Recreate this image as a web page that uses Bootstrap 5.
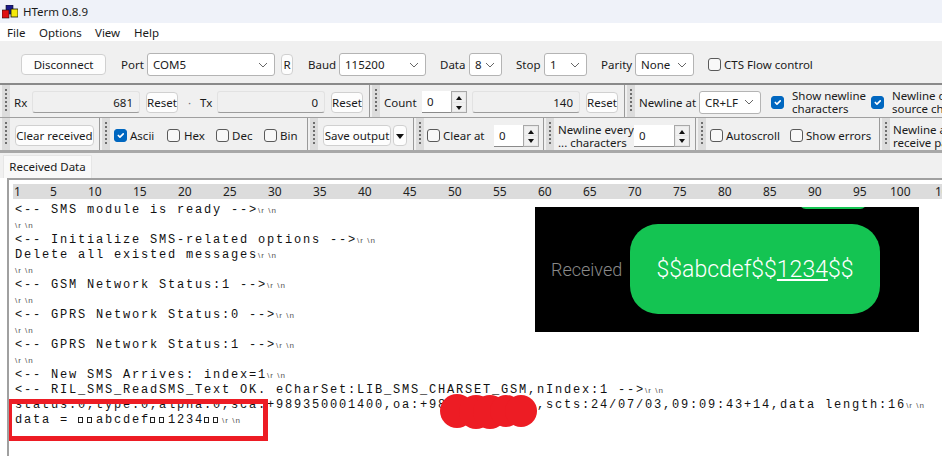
<!DOCTYPE html>
<html lang="en">
<head>
<meta charset="utf-8">
<title>HTerm 0.8.9</title>
<link href="https://cdn.jsdelivr.net/npm/bootstrap@5.3.0/dist/css/bootstrap.min.css" rel="stylesheet">
<style>
html,body{height:456px;overflow:hidden}
body{font-family:"Noto Sans","Open Sans",sans-serif;font-size:11.5px;line-height:15px;color:#1a1a1a;background:#fff;width:942px}
.titlebar{height:23px;background:#eff2f9;padding-left:2px}
.titlebar svg{margin-right:5px}
.menubar{height:18px;background:#fff;padding-left:7px}
.tool{background:#f0f0f0;white-space:nowrap;overflow:hidden;width:942px}
.tool span{flex:none}
.row1{height:44px;padding-top:5px;padding-left:21px;border-bottom:2px solid #8a8a8a}
.row2{height:33px;padding-top:2px;border-bottom:1px solid #a0a0a0}
.row3{height:35px;padding-top:3px;border-bottom:3px solid #a8a8a8}
.row2 .grip,.row2 .vsep{margin-top:-2px}
.row3 .grip,.row3 .vsep{margin-top:-3px}
.grip{width:8px;align-self:stretch;margin-left:2px;background-color:#dcdcdc;background-image:repeating-linear-gradient(#6e6e6e 0 2px,transparent 2px 4px);background-size:2px 24px;background-repeat:no-repeat;background-position:3px 4px;flex:none}
.vsep{width:1px;align-self:stretch;background:#9a9a9a;flex:none}
.btn.xp{height:21px;padding:0;font-size:11.5px;line-height:19px;background:#fdfdfd;border:1px solid #d0d0d0;border-radius:4px;color:#1a1a1a;flex:none;text-align:center}
.form-select.xs{height:23px;padding:0 0 0 5px;font-size:11.5px;line-height:21px;border:1px solid #b4b4b4;border-radius:3px;color:#1a1a1a;background-color:#fff;flex:none;background-image:url("data:image/svg+xml,%3csvg xmlns='http://www.w3.org/2000/svg' viewBox='0 0 10 6'%3e%3cpath fill='none' stroke='%23666' d='M1 1l4 4 4-4'/%3e%3c/svg%3e");background-size:10px 6px;background-position:right 6px center}
.form-control.ro{height:22px;padding:0 6px;font-size:11.5px;line-height:18px;text-align:right;background:#f0f0f0;border:1px solid #e2e2e2;border-bottom-color:#9c9c9c;border-radius:3px;color:#1a1a1a;width:108px;flex:none}
.form-control.sp{height:22px;padding:0 5px;font-size:11.5px;background:#fff;border:0;border-bottom:1px solid #8a8a8a;border-radius:0;color:#1a1a1a;flex:none}
.spin{width:16px;height:22px;flex:none;border:1px solid #a8a8a8;background:#e8e8e8;gap:1px;padding:1px}
.spin i{display:block;flex:1;background:#f0f0f0;position:relative}
.spin i::after{content:"";position:absolute;left:3px;top:3px;border:3px solid transparent;border-top:0;border-bottom:4px solid #111}
.spin i.dn::after{border-bottom:0;border-top:4px solid #111}
.form-check-input.ck{width:13px;height:13px;margin-top:0;margin-bottom:0;flex:none;border:1px solid #5a5a5a;border-radius:3px;background-color:#f8f8f8}
.form-check-input.ck:checked{background-color:#0067c0;border-color:#0067c0}
.two{line-height:13px;flex:none}
.caret{width:0;height:0;border:4px solid transparent;border-bottom:0;border-top:5px solid #111;display:inline-block;vertical-align:middle}
.ml2{margin-left:2px}.ml3{margin-left:3px}.ml4{margin-left:4px}.ml5{margin-left:5px}.ml6{margin-left:6px}.ml7{margin-left:7px}.ml8{margin-left:8px}.ml10{margin-left:10px}.ml11{margin-left:11px}.ml12{margin-left:12px}.ml13{margin-left:13px}.ml14{margin-left:14px}.ml15{margin-left:15px}
.w4{width:4px}.w10{width:10px}.w12{width:12px}.w14{width:14px}.w17{width:17px}.w19{width:19px}.w20{width:20px}.w22{width:22px}.w24{width:24px}.w25{width:25px}.w27{width:27px}.w29{width:29px}.w30{width:30px}.w32{width:32px}.w33{width:33px}.w39{width:39px}.w40{width:40px}.w43{width:43px}.w54{width:54px}.w56{width:56px}.w59{width:59px}.w62{width:62px}.w68{width:68px}.w72{width:72px}.w73{width:73px}.w79{width:79px}.w85{width:85px}.w87{width:87px}.w128{width:128px}
.tabarea{height:25px;background:#f0f0f0;padding-left:3px;padding-top:2px}
.nav-tabs.tb{border:0}
.nav-tabs.tb .nav-link{height:23px;width:89px;padding:3px 0 0;text-align:center;font-size:11.5px;line-height:15px;color:#1a1a1a;background:#f9f9f9;border:1px solid #e6e6e6;border-bottom:0;border-radius:0}
.term{position:relative;height:278px;margin-left:7px;border-left:2px solid #a0a0a0;border-top:2px solid #a0a0a0;background:#fff;padding:4px 0 0 4px;overflow:hidden}
.ruler{height:15px;background:#dcdcdc;white-space:nowrap;overflow:hidden;padding-left:1px;color:#222;font-size:12px}
.ruler span{flex:none;width:45px}
.ruler .c1{width:36px}.ruler .c2{width:38px}.ruler .c3{width:37px}
.out{margin:4px 0 0 2px;font-family:"Liberation Mono",monospace;font-size:12px;line-height:15px;letter-spacing:1.8px;color:#111;white-space:pre;overflow:visible}
.nl{font-family:"Liberation Sans",sans-serif;font-size:8px;letter-spacing:1px;color:#555}
.bx{display:inline-block;width:9px;letter-spacing:0}
.bx::before{content:"";display:inline-block;width:5px;height:6px;border:1px solid #222;margin-right:3px}
.shot{position:absolute;left:526px;top:27px;width:384px;height:125px;background:#000;overflow:hidden}
.shot .peek{position:absolute;left:264px;top:-12px;width:68px;height:14px;border-radius:7px;background:#14c452}
.shot .lbl{color:#8a8a8a;font-family:Roboto,sans-serif;font-weight:300;font-size:18px;line-height:20px;flex:none;width:95px;padding-left:16px}
.shot .bub{width:250px;height:90px;margin-top:17px;background:#14c452;border-radius:28px;color:#fff;font-family:Roboto,sans-serif;font-weight:300;font-size:23px;flex:none}
.redbox{position:absolute;left:-2px;top:219px;width:261px;height:42px;border:5px solid #ed1c24}
.blob{position:absolute;left:431px;top:214px}
</style>
</head>
<body>
<header class="titlebar d-flex align-items-center">
<svg width="16" height="14" viewBox="0 0 16 14"><rect x="4" y="0" width="7" height="9" fill="#1a1a8c" stroke="#111" stroke-width=".6"/><rect x="0" y="5" width="7" height="8" fill="#e01010" stroke="#111" stroke-width=".6"/><rect x="9" y="4" width="7" height="8" fill="#f5e90a" stroke="#111" stroke-width=".8"/></svg>
<span>HTerm 0.8.9</span>
</header>
<nav class="menubar d-flex align-items-center"><span class="w32">File</span><span class="w56">Options</span><span class="w39">View</span><span>Help</span></nav>

<section class="tool">
<div class="row1 d-flex align-items-center">
<button class="btn xp w85">Disconnect</button>
<span class="ml15 w22">Port</span>
<select class="form-select xs w128 ml4"><option>COM5</option></select>
<button class="btn xp w12 ml6">R</button>
<span class="ml15 w27">Baud</span>
<select class="form-select xs w87 ml4"><option>115200</option></select>
<span class="ml14 w24">Data</span>
<select class="form-select xs w33 ml5"><option>8</option></select>
<span class="ml14 w24">Stop</span>
<select class="form-select xs w43 ml4"><option>1</option></select>
<span class="ml14 w30">Parity</span>
<select class="form-select xs w59 ml4"><option>None</option></select>
<input class="form-check-input ck ml14" type="checkbox">
<span class="ml3">CTS Flow control</span>
</div>

<div class="row2 d-flex align-items-center">
<div class="grip"></div>
<span class="ml4 w12">Rx</span>
<input class="form-control ro ml6" readonly value="681">
<button class="btn xp w32 ml6">Reset</button>
<span class="ml10 w4 text-secondary">·</span>
<span class="ml8 w10">Tx</span>
<input class="form-control ro ml7" readonly value="0">
<button class="btn xp w32 ml6">Reset</button>
<div class="vsep ml6"></div>
<div class="grip"></div>
<span class="ml4 w33">Count</span>
<input class="form-control sp w29 ml5" value="0">
<div class="spin d-flex flex-column"><i></i><i class="dn"></i></div>
<input class="form-control ro ml5" readonly value="140">
<button class="btn xp w32 ml6">Reset</button>
<div class="vsep ml6"></div>
<div class="grip"></div>
<span class="ml4 w56">Newline at</span>
<select class="form-select xs w62 ml4"><option>CR+LF</option></select>
<input class="form-check-input ck ml10" type="checkbox" checked>
<span class="two ml8 w73">Show newline<br>characters</span>
<input class="form-check-input ck ml6" type="checkbox" checked>
<span class="two ml8">Newline on<br>source change</span>
</div>

<div class="row3 d-flex align-items-center">
<div class="grip"></div>
<button class="btn xp w79 ml5">Clear received</button>
<div class="vsep ml5"></div>
<div class="grip"></div>
<input class="form-check-input ck ml4" type="checkbox" checked>
<span class="ml3 w25">Ascii</span>
<input class="form-check-input ck ml12" type="checkbox">
<span class="ml4 w19">Hex</span>
<input class="form-check-input ck ml13" type="checkbox">
<span class="ml3 w20">Dec</span>
<input class="form-check-input ck ml12" type="checkbox">
<span class="ml3 w17">Bin</span>
<div class="vsep ml10"></div>
<div class="grip"></div>
<button class="btn xp w68 ml5">Save output</button>
<button class="btn xp w14 ml2"><span class="caret"></span></button>
<div class="vsep ml6"></div>
<div class="grip"></div>
<input class="form-check-input ck ml3" type="checkbox">
<span class="ml3 w40">Clear at</span>
<input class="form-control sp w29 ml11" value="0">
<div class="spin d-flex flex-column"><i></i><i class="dn"></i></div>
<div class="vsep ml4"></div>
<div class="grip"></div>
<span class="two ml4 w72">Newline every<br>... characters</span>
<input class="form-control sp w40 ml4" value="0">
<div class="spin d-flex flex-column"><i></i><i class="dn"></i></div>
<div class="vsep ml5"></div>
<div class="grip"></div>
<input class="form-check-input ck ml4" type="checkbox">
<span class="ml3 w54">Autoscroll</span>
<input class="form-check-input ck ml10" type="checkbox">
<span class="ml3 w62">Show errors</span>
<div class="vsep ml11"></div>
<div class="grip"></div>
<span class="two ml3">Newline after<br>receive pause</span>
</div>
</section>

<div class="tabarea">
<ul class="nav nav-tabs tb"><li class="nav-item"><a class="nav-link active" href="#">Received Data</a></li></ul>
</div>

<main class="term">
<div class="ruler d-flex"><span class="c1">1</span><span class="c2">5</span><span>10</span><span>15</span><span>20</span><span>25</span><span>30</span><span>35</span><span>40</span><span>45</span><span>50</span><span>55</span><span>60</span><span>65</span><span>70</span><span>75</span><span>80</span><span>85</span><span>90</span><span class="c3">95</span><span>100</span><span>105</span></div>
<pre class="out mb-0">&lt;-- SMS module is ready --&gt;<span class="nl">\r \n</span>
<span class="nl">\r \n</span>
&lt;-- Initialize SMS-related options --&gt;<span class="nl">\r \n</span>
Delete all existed messages<span class="nl">\r \n</span>
<span class="nl">\r \n</span>
&lt;-- GSM Network Status:1 --&gt;<span class="nl">\r \n</span>
<span class="nl">\r \n</span>
&lt;-- GPRS Network Status:0 --&gt;<span class="nl">\r \n</span>
<span class="nl">\r \n</span>
&lt;-- GPRS Network Status:1 --&gt;<span class="nl">\r \n</span>
<span class="nl">\r \n</span>
&lt;-- New SMS Arrives: index=1<span class="nl">\r \n</span>
&lt;-- RIL_SMS_ReadSMS_Text OK. eCharSet:LIB_SMS_CHARSET_GSM,nIndex:1 --&gt;<span class="nl">\r \n</span>
status:0,type:0,alpha:0,sca:+989350001400,oa:+98          ,scts:24/07/03,09:09:43+14,data length:16<span class="nl">\r \n</span>
data = <span class="bx"></span><span class="bx"></span>abcdef<span class="bx"></span><span class="bx"></span>1234<span class="bx"></span><span class="bx"></span><span class="nl">\r \n</span></pre>

<div class="shot d-flex">
<div class="peek"></div>
<div class="lbl align-self-center">Received</div>
<div class="bub d-flex align-items-center justify-content-center"><span>$$abcdef$$<u>1234</u>$$</span></div>
</div>
<div class="redbox"></div>
<svg class="blob" width="98" height="36" viewBox="0 0 98 36" fill="#ed1c24"><circle cx="17" cy="17" r="17"/><circle cx="36" cy="18" r="17"/><circle cx="50" cy="18" r="17"/><circle cx="66" cy="17" r="16"/><circle cx="81" cy="17" r="16"/></svg>
</main>
<script src="https://cdn.jsdelivr.net/npm/bootstrap@5.3.0/dist/js/bootstrap.bundle.min.js"></script>
</body>
</html>
